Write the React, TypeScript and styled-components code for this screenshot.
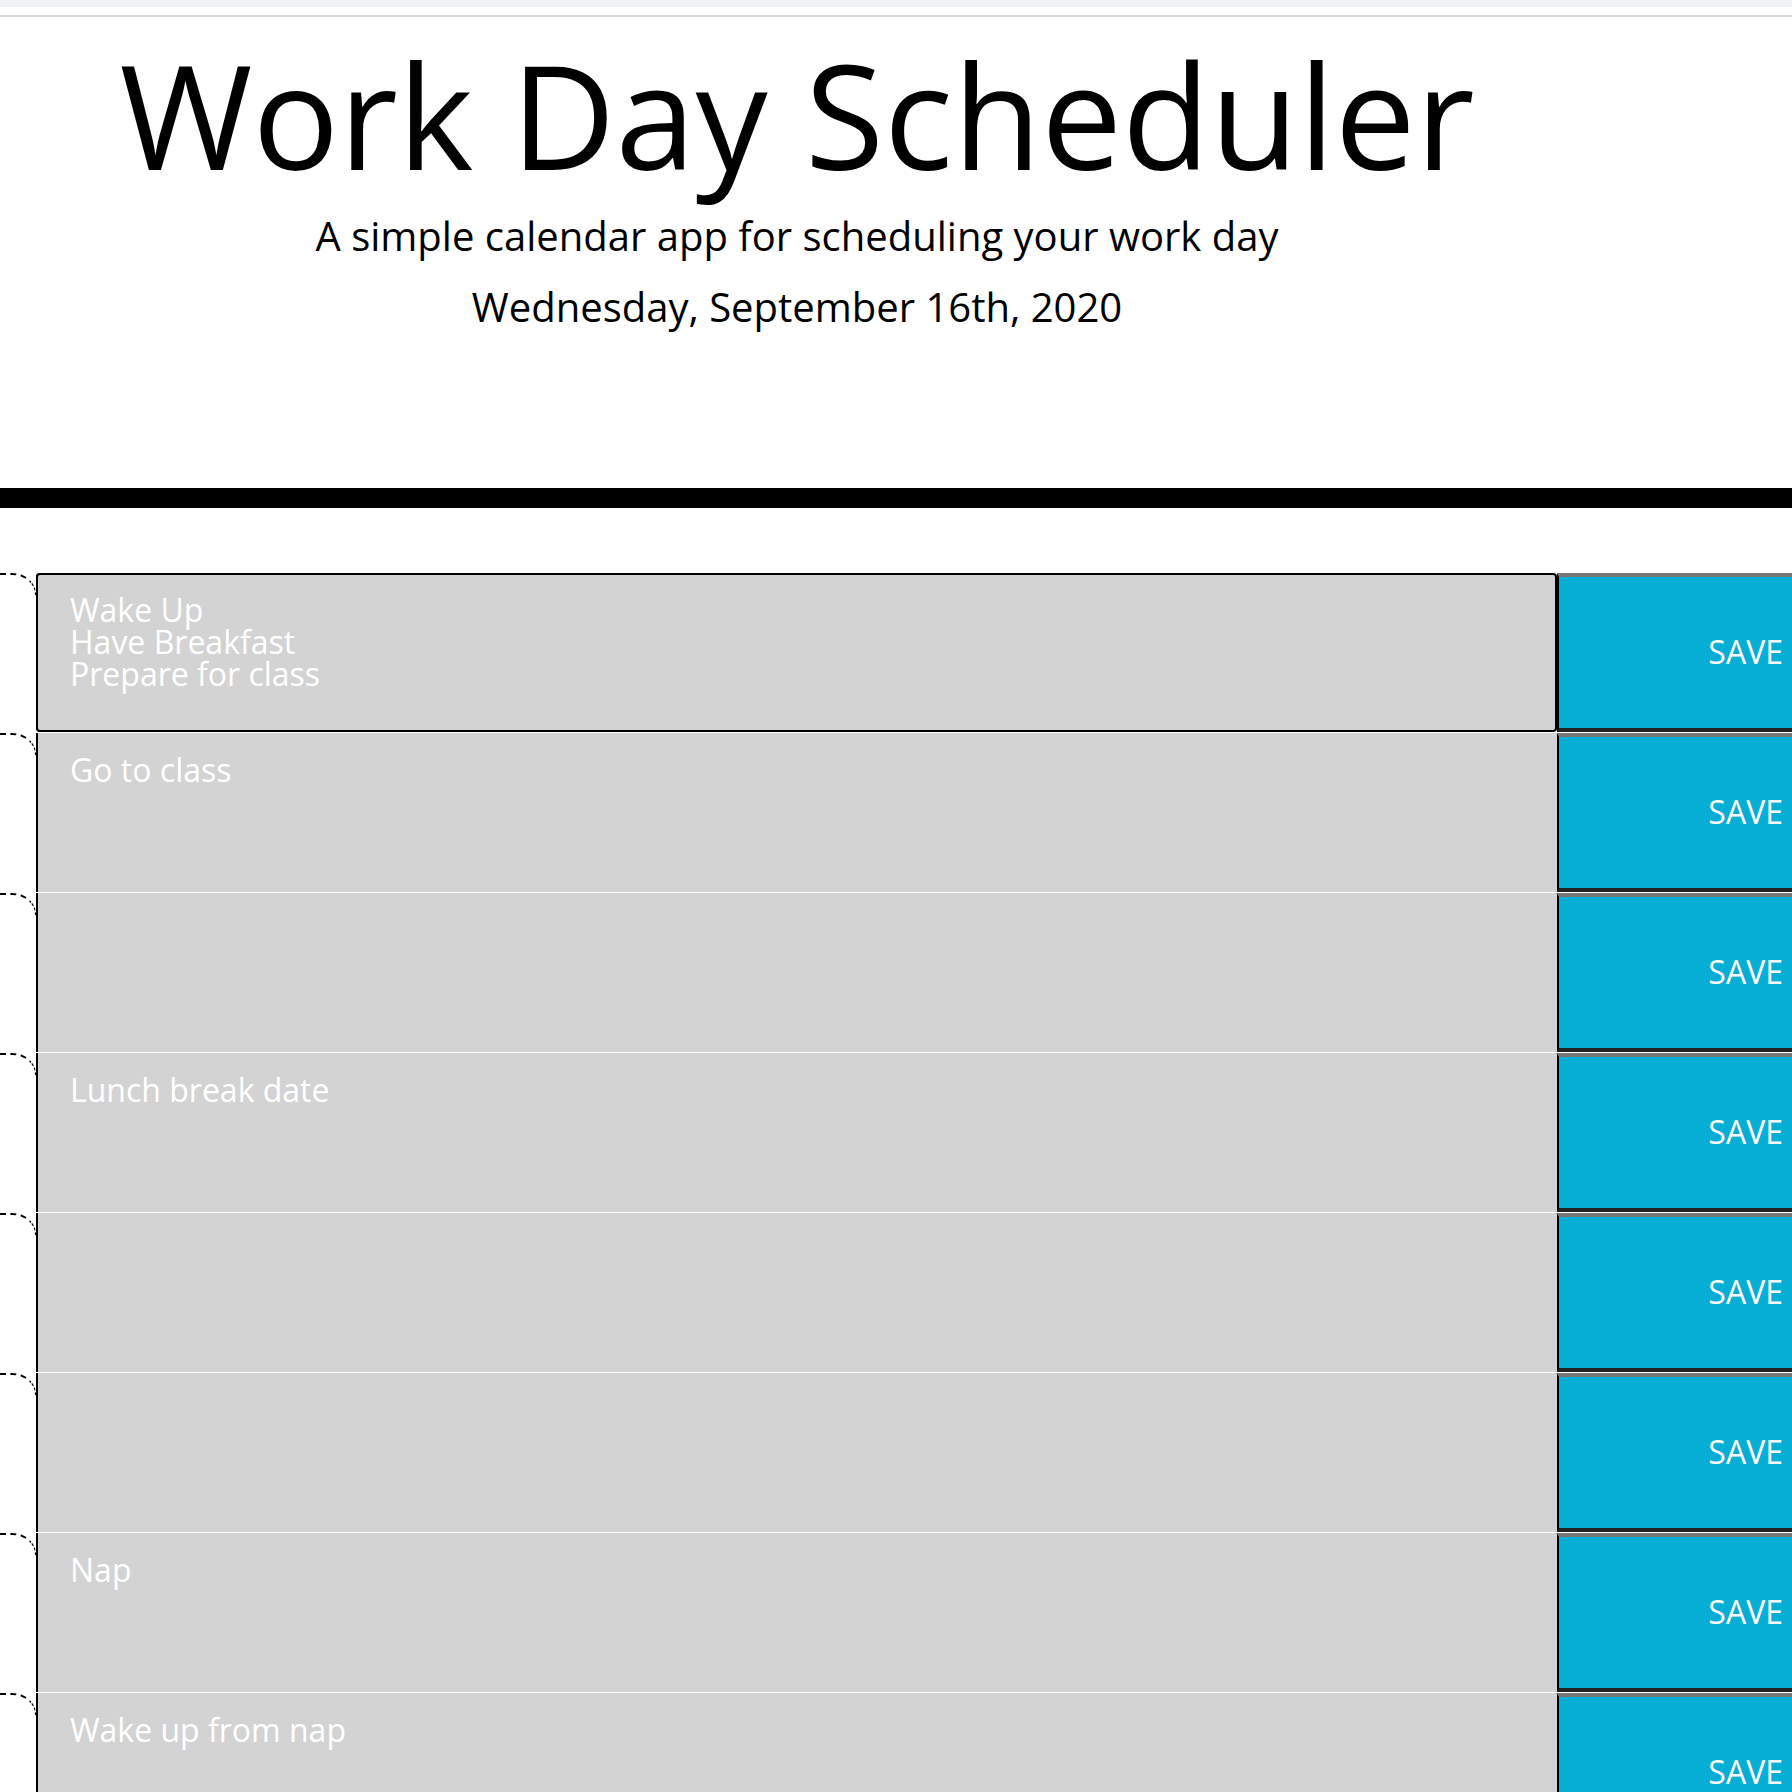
import React from "react";
import styled, { createGlobalStyle } from "styled-components";

const GlobalStyle = createGlobalStyle`
  html, body {
    margin: 0;
    padding: 0;
    background: #ffffff;
    overflow: hidden;
  }
  body {
    font-family: "Open Sans", "Noto Sans", sans-serif;
    color: #000000;
  }
`;

const Page = styled.div`
  width: 1792px;
  display: flex;
  flex-direction: column;
`;

const BrowserStrip = styled.div`
  height: 7px;
  background: #f1f2f4;
`;

const BrowserRule = styled.div`
  height: 2px;
  margin-top: 8px;
  background: #d9d9dc;
`;

const Jumbotron = styled.header`
  width: 1792px;
  box-sizing: border-box;
  padding: 11px 0 151px;
  border-bottom: 20px solid #000000;
  display: flex;
  flex-direction: column;
`;

const HeadInner = styled.div`
  width: 1594px;
  text-align: center;
`;

const Title = styled.h1`
  margin: 0;
  font-size: 144px;
  font-weight: 400;
  line-height: 1.2;
`;

const Lead = styled.p<{ $gap: number }>`
  margin: ${(p) => p.$gap}px 0 0;
  font-size: 40px;
  font-weight: 400;
  line-height: 1.5;
`;

const Schedule = styled.section`
  margin-top: 65px;
  display: flex;
  flex-direction: column;
`;

const Row = styled.div`
  display: flex;
  align-items: flex-start;
  height: 160px;
  box-sizing: border-box;
  border-bottom: 1px solid #ffffff;
`;

const Hour = styled.div`
  width: 36px;
  height: 22px;
  flex: none;
  box-sizing: border-box;
  border-top: 2px dashed #000000;
  border-right: 1px dashed #000000;
  border-top-right-radius: 24px 21px;
  background: #ffffff;
`;

const Description = styled.textarea<{ $focused?: boolean }>`
  flex: none;
  width: 1521px;
  height: 100%;
  box-sizing: border-box;
  margin: 0;
  padding: 21px 32px 0 32px;
  border: none;
  border-left: 2px solid #000000;
  background: #d3d3d3;
  color: #ffffff;
  font-family: "Open Sans", "Noto Sans", sans-serif;
  font-size: 32px;
  line-height: 1;
  resize: none;
  overflow: hidden;
  white-space: pre-wrap;
  outline: ${(p) => (p.$focused ? "2px solid #000000" : "none")};
  outline-offset: -2px;
  border-radius: ${(p) => (p.$focused ? "4px" : "0")};
`;

const SaveBtn = styled.button`
  flex: 1;
  height: 100%;
  box-sizing: border-box;
  margin: 0;
  padding: 0 9px 0 0;
  display: flex;
  align-items: center;
  justify-content: flex-end;
  background: #06aed5;
  color: #ffffff;
  border: none;
  border-top: 4px solid #777777;
  border-bottom: 4px solid #222222;
  border-left: 2px solid #000000;
  font-family: "Open Sans", "Noto Sans", sans-serif;
  font-size: 32px;
  line-height: 1;
  cursor: pointer;
`;

const entries: string[] = [
  "Wake Up\nHave Breakfast\nPrepare for class",
  "Go to class",
  "",
  "Lunch break date",
  "",
  "",
  "Nap",
  "Wake up from nap",
];

export default function App() {
  return (
    <>
      <GlobalStyle />
      <Page>
        <BrowserStrip />
        <BrowserRule />
        <Jumbotron>
          <HeadInner>
            <Title>Work Day Scheduler</Title>
            <Lead $gap={5}>A simple calendar app for scheduling your work day</Lead>
            <Lead $gap={11}>Wednesday, September 16th, 2020</Lead>
          </HeadInner>
        </Jumbotron>
        <Schedule>
          {entries.map((text, i) => (
            <Row key={i}>
              <Hour />
              <Description $focused={i === 0} defaultValue={text} spellCheck={false} />
              <SaveBtn>SAVE</SaveBtn>
            </Row>
          ))}
        </Schedule>
      </Page>
    </>
  );
}
